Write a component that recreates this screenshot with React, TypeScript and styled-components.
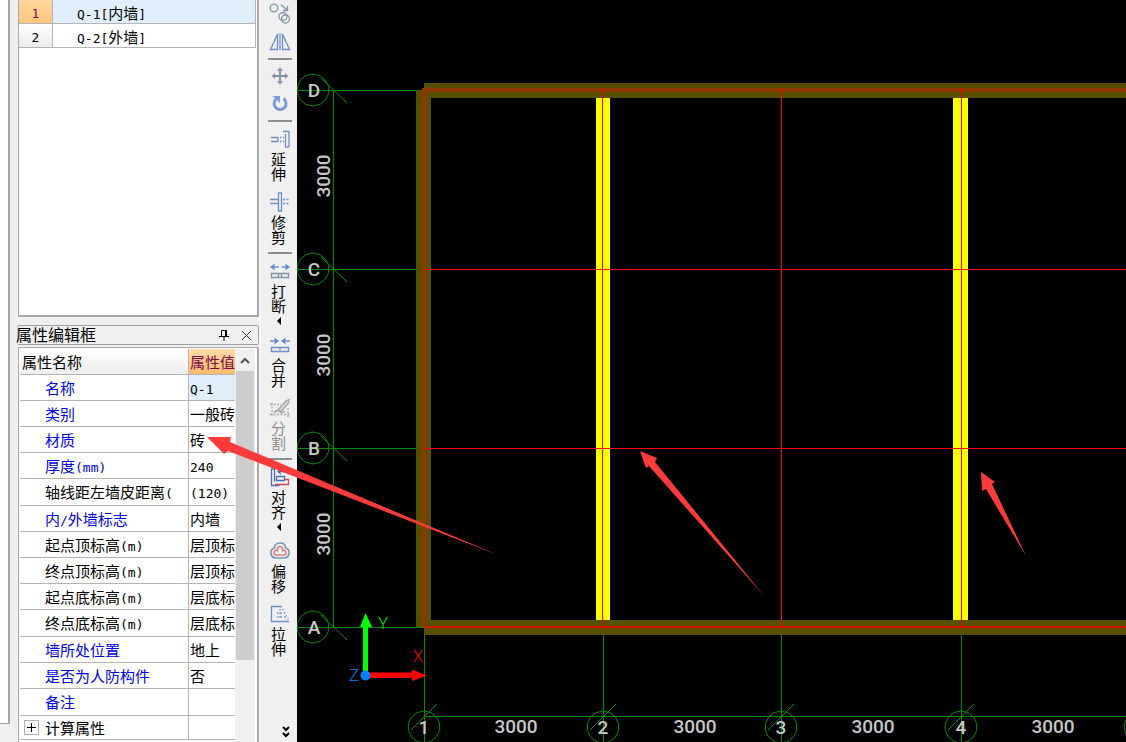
import React from "react";
import styled, { createGlobalStyle } from "styled-components";

const GlobalStyle = createGlobalStyle`
  * { box-sizing: border-box; }
  body {
    margin: 0;
    background: #f0f0f0;
    font-family: "Noto Sans CJK SC", sans-serif;
    font-size: 15px;
    color: #000;
  }
  button { font: inherit; color: inherit; border: 0; background: none; padding: 0; }
`;

const Page = styled.div`
  position: relative;
  display: flex;
  height: 100vh;
  overflow: hidden;
`;

const DockEdge = styled.div`
  flex: none;
  width: 10px;
  display: flex;
  flex-direction: column;
  padding-bottom: 18px;
`;

const DockSheet = styled.div`
  flex: 1;
  background: #fff;
  border-right: 2px solid #a8a8a8;
  border-bottom: 1px solid #a0a0a0;
`;

const SidePanel = styled.div`
  flex: none;
  width: 249px;
  padding-left: 7px;
  display: flex;
  flex-direction: column;
`;

const ListPane = styled.section`
  flex: none;
  height: 317px;
  margin-left: 1px;
  background: #fff;
  border: solid #a8a8a8;
  border-width: 0 2px 2px 1px;
`;

const Grid = styled.table`
  width: 100%;
  table-layout: fixed;
  border-collapse: separate;
  border-spacing: 0;
`;

const ListGrid = styled(Grid)`
  width: 237px;
  border-right: 1px solid #b4b4b4;
`;

const IndexCell = styled.th<{ $active?: boolean }>`
  width: 34px;
  height: 24px;
  padding: 0;
  font-weight: 400;
  line-height: 20px;
  color: ${(p) => (p.$active ? "#850f45" : "#000")};
  background: ${(p) =>
    p.$active ? "linear-gradient(#ffd7a0, #ffc77c)" : "linear-gradient(#fff, #ececec)"};
  border-right: 1px solid #b4b4b4;
  border-bottom: 1px solid #b4b4b4;
`;

const NameCell = styled.td<{ $active?: boolean }>`
  height: 24px;
  padding: 2px 0 0 24px;
  line-height: 20px;
  white-space: nowrap;
  background: ${(p) => (p.$active ? "#e1effd" : "#fff")};
  border-bottom: 1px solid #b4b4b4;
`;

const TitleBar = styled.header`
  flex: none;
  display: flex;
  align-items: center;
  height: 20px;
  margin: 8px 0 2px;
  padding-right: 4px;
  border: 1px solid #a0a0a0;
  border-left-color: #c8c8c8;
  border-radius: 2px;
`;

const PanelTitle = styled.h2`
  flex: 1;
  margin: 0 0 2px -2px;
  font-size: 16px;
  font-weight: 400;
  line-height: 16px;
`;

const TitleButton = styled.button`
  width: 16px;
  height: 16px;
  margin-left: 6px;
  display: flex;
  align-items: center;
  justify-content: center;
`;

const PropertyPane = styled.section`
  flex: 1;
  min-height: 0;
  display: flex;
  overflow: hidden;
  margin-left: 1px;
  padding: 1px 2px 0 1px;
  border: solid #a8a8a8;
  border-width: 1px 2px 0 1px;
  background: #fff;
`;

const TableClip = styled.div`
  flex: 1;
  min-width: 0;
  overflow: hidden;
`;

const HeadCell = styled.th<{ $active?: boolean }>`
  width: ${(p) => (p.$active ? "auto" : "169px")};
  height: 26px;
  padding: 0 0 0 ${(p) => (p.$active ? 1 : 2)}px;
  text-align: left;
  font-weight: 400;
  line-height: 24px;
  white-space: nowrap;
  color: ${(p) => (p.$active ? "#7a0a4a" : "#000")};
  background: ${(p) =>
    p.$active ? "linear-gradient(#ffdca8, #f9bd6c)" : "linear-gradient(#fff, #ededed)"};
  border-right: ${(p) => (p.$active ? 0 : "1px solid #b4b4b4")};
  border-bottom: 1px solid #b4b4b4;
`;

const PropName = styled.td<{ $h: number; $link?: boolean }>`
  height: ${(p) => p.$h}px;
  padding: 0 0 0 25px;
  line-height: 22px;
  white-space: nowrap;
  color: ${(p) => (p.$link ? "#0000e6" : "#000")};
  border-right: 1px solid #b4b4b4;
  border-bottom: 1px solid #b4b4b4;
`;

const PropValue = styled.td<{ $active?: boolean }>`
  padding: 0 0 0 1px;
  line-height: 22px;
  white-space: nowrap;
  background: ${(p) => (p.$active ? "#e1effd" : "#fff")};
  border-bottom: 1px solid #b4b4b4;
`;

const GroupName = styled(PropName)`
  padding-left: 4px;
`;

const GroupLabel = styled.div`
  display: flex;
  align-items: center;
  gap: 6px;
`;

const ExpandButton = styled.button`
  width: 15px;
  height: 15px;
  border: 1px solid #b0b0b0;
  display: flex;
  align-items: center;
  justify-content: center;
`;

const Latin = styled.span`
  font-family: "DejaVu Sans Mono", monospace;
  font-size: 13px;
  line-height: 1;
`;

const ScrollBar = styled.div`
  flex: none;
  width: 20px;
  padding: 0 1px;
  background: #f0f0f0;
  display: flex;
  flex-direction: column;
`;

const ScrollUp = styled.button`
  flex: none;
  height: 22px;
  display: flex;
  align-items: center;
  justify-content: center;
`;

const ScrollTrack = styled.div`
  flex: 1;
`;

const ScrollThumb = styled.div`
  height: 78%;
  background: #cdcdcd;
`;

const Toolbar = styled.nav`
  flex: none;
  width: 38px;
  padding: 0 5px 0 7px;
  display: flex;
  flex-direction: column;
  align-items: center;
  border-left: 2px solid #f8f8f8;
`;

const IconTool = styled.button`
  flex: none;
  width: 24px;
  height: 28px;
  display: flex;
  align-items: center;
  justify-content: center;
`;

const TextTool = styled.button`
  flex: none;
  width: 24px;
  padding: 5px 0;
  display: flex;
  flex-direction: column;
  align-items: center;
  gap: 3px;
  &:disabled { color: #8c8c8c; }
`;

const ToolLabel = styled.span`
  width: 15px;
  height: 30px;
  margin-right: 3px;
  writing-mode: vertical-rl;
  line-height: 15px;
`;

const Caret = styled.span`
  width: 0;
  height: 8px;
  margin-right: 2px;
  border: solid transparent;
  border-width: 4px 4px 4px 0;
  border-right-color: #000;
`;

const Separator = styled.hr`
  flex: none;
  width: 24px;
  height: 2px;
  margin: 2px 0;
  border: 0;
  background: #8c8c8c;
`;

const MoreButton = styled.button`
  margin: auto 0 2px 12px;
  height: 14px;
  display: flex;
`;

const Drawing = styled.main`
  flex: 1;
  min-width: 0;
  background: #000;
  svg { display: block; width: 100%; height: 100%; }
`;

const AxisText = styled.text`
  font-family: Roboto, sans-serif;
  font-size: 19px;
  font-weight: 500;
  fill: #c8c8c8;
  text-anchor: middle;
`;

const UcsText = styled.text`
  font-family: Roboto, sans-serif;
  font-size: 17px;
  font-weight: 300;
  text-anchor: middle;
`;

const Notes = styled.svg`
  position: absolute;
  inset: 0;
  width: 100%;
  height: 100%;
  pointer-events: none;
`;

/* Half-width characters are set in the monospace face, ideographs in the CJK one. */
function Mixed({ text }: { text: string }) {
  return (
    <>
      {text.split(/([\x20-\x7e]+)/).map((part, i) =>
        i % 2 ? <Latin key={i}>{part}</Latin> : part
      )}
    </>
  );
}

const components = ["Q-1[内墙]", "Q-2[外墙]"];

const properties: { name: string; value: string; link?: boolean; h: number }[] = [
  { name: "名称", value: "Q-1", link: true, h: 26 },
  { name: "类别", value: "一般砖", link: true, h: 26 },
  { name: "材质", value: "砖", link: true, h: 26 },
  { name: "厚度(mm)", value: "240", link: true, h: 26 },
  { name: "轴线距左墙皮距离(", value: "(120)", h: 27 },
  { name: "内/外墙标志", value: "内墙", link: true, h: 26 },
  { name: "起点顶标高(m)", value: "层顶标", h: 26 },
  { name: "终点顶标高(m)", value: "层顶标", h: 26 },
  { name: "起点底标高(m)", value: "层底标", h: 26 },
  { name: "终点底标高(m)", value: "层底标", h: 27 },
  { name: "墙所处位置", value: "地上", link: true, h: 26 },
  { name: "是否为人防构件", value: "否", link: true, h: 26 },
  { name: "备注", value: "", link: true, h: 27 },
];

const BLUE = "#6f8fc6";
const GRAY = "#8494a8";

function Icon({ children, h = 20 }: { children: React.ReactNode; h?: number }) {
  return (
    <svg width="22" height={h} viewBox={`0 0 22 ${h}`} fill="none" stroke={BLUE} strokeWidth="1.3">
      {children}
    </svg>
  );
}

const CopyIcon = () => (
  <Icon h={22}>
    <g stroke={GRAY}>
      <circle cx="5" cy="5" r="3.8" />
      <path d="M12 1.5l6.5 6M18.5 3v4.5h-4.5" />
      <circle cx="14" cy="13.5" r="4" />
      <circle cx="16.5" cy="16" r="4" />
    </g>
  </Icon>
);

const MirrorIcon = () => (
  <Icon h={22}>
    <path d="M1.5 18.5h7V3zM20.5 18.5h-7V3zM11 2v17" fill="#e8effa" />
  </Icon>
);

const MoveIcon = () => (
  <Icon h={22}>
    <path d="M11 4v14M4 11h14" stroke={GRAY} strokeWidth="2" />
    <path d="M11 2.5l3 3.5H8zM11 19.5l3-3.5H8zM2.5 11L6 8v6zM19.5 11L16 8v6z" fill={GRAY} stroke="none" />
  </Icon>
);

const RotateIcon = () => (
  <Icon h={22}>
    <path d="M14.5 5.5a6 6 0 1 1-7.5.5" strokeWidth="3" stroke="#7b9bd6" />
    <path d="M3.5 3h7.5v7z" fill="#7b9bd6" stroke="none" />
  </Icon>
);

const ExtendIcon = () => (
  <Icon>
    <path d="M2 8.5h7M2 12.5h7M9 8v5" />
    <path d="M11 8.5h4M11 12.5h4" strokeDasharray="1.5 1.5" />
    <path d="M14 2.5h6V18M16.5 5v13M16 18h4" />
  </Icon>
);

const TrimIcon = () => (
  <Icon>
    <path d="M9.5 1h3v18h-3zM1 7.5h8M1 11.5h8" />
    <path d="M14 7.5h7M14 11.5h7" strokeDasharray="2 1.5" />
  </Icon>
);

const BreakIcon = () => (
  <Icon>
    <path d="M4 6h6M12.5 6h6" />
    <path d="M1 6l5-3.5-1 3.5 1 3.5zM21 6l-5-3.5 1 3.5-1 3.5z" fill="#5c86d0" stroke="none" />
    <path d="M2.5 12.5h17v4h-17zM9.5 12.5v4M12.5 12.5v4" stroke={GRAY} />
  </Icon>
);

const MergeIcon = () => (
  <Icon>
    <path d="M1 6h5M16 6h5" />
    <path d="M10 6L5 2.5 6 6 5 9.5zM12 6l5-3.5-1 3.5 1 3.5z" fill="#5c86d0" stroke="none" />
    <path d="M2.5 12.5h17v4h-17zM11 12.5v4" />
  </Icon>
);

const SplitIcon = () => (
  <Icon>
    <g stroke="#a8a8a8">
      <path d="M1 6.5h11M1 16.5h20M3 5v13M19 10v9" strokeDasharray="2 1.5" />
      <path d="M9 12l8-9 3-1.5L19.5 5l-7 8.5zM5 15c2-4 5-3 6-1 1 1.5 3 .5 5-1" fill="#d4d4d4" />
    </g>
  </Icon>
);

const AlignIcon = () => (
  <Icon>
    <path d="M2.5 2v16.5h8M5.5 2v12.5M2 2h4" stroke="#4e6fae" />
    <path d="M9 4.5h10M12 2L9 4.5 12 7" stroke="#4e6fae" />
    <path d="M7.5 9.5h8v4h-8z" stroke="#4e6fae" />
    <path d="M6 17.5h13.5v-5H16" stroke="#d04a5a" />
  </Icon>
);

const OffsetIcon = () => (
  <Icon>
    <path d="M11 2c3.5 0 5.5 2 5.5 5 3 .5 4 3 3.5 5.5-.5 3-3 4.5-5 4.5H7c-2 0-4.5-1.5-5-4.5C1.5 10 2.5 7.5 5.5 7c0-3 2-5 5.5-5z" stroke="#7595b5" strokeWidth="1.6" />
    <path d="M11 5.5c2 0 3 1.5 2.5 4 2-.5 3.5.5 3.5 2s-1 2.5-2.5 2.5h-7C6 14 5 13 5 11.5s1.5-2.5 3.5-2C8 7 9 5.5 11 5.5z" stroke="#dd7a80" strokeWidth="1.5" />
  </Icon>
);

const StretchIcon = () => (
  <Icon>
    <path d="M12 2.5H2.5v15H20" />
    <path d="M12 2l8 15M11 5v10M8 9h8M8 13h9" strokeDasharray="1.5 2" />
  </Icon>
);

/* Plan geometry: axis grid of the floor plan, measured from the view's corner. */
const columns = [
  { x: 127, label: "1" },
  { x: 306, label: "2" },
  { x: 484, label: "3" },
  { x: 664, label: "4" },
  { x: 843, label: "" },
];
const rows = [
  { label: "D", y: 90 },
  { label: "C", y: 269 },
  { label: "B", y: 448 },
  { label: "A", y: 627 },
];
const FAR = 4000;

function Bubble({ x, y }: { x: number; y: number }) {
  const points = Array.from({ length: 14 }, (_, i) => {
    const a = (i / 14) * Math.PI * 2 - Math.PI / 2;
    return `${x + 16 * Math.cos(a)},${y + 16 * Math.sin(a)}`;
  }).join(" ");
  return <polygon points={points} />;
}

function Plan() {
  return (
    <svg aria-label="平面图">
      <g fill="none" stroke="#008a00" strokeWidth="1">
        <path d={`M36.5 90V627M127 716.5H${FAR}`} />
        {rows.map((r) => (
          <g key={r.label}>
            <Bubble x={16} y={r.y} />
            <path d={`M0 ${r.y + 0.5}H127M24 ${r.y - 12}L50 ${r.y + 13}`} />
          </g>
        ))}
        {columns.map(({ x }) => (
          <g key={x}>
            <Bubble x={x} y={727} />
            <path d={`M${x + 0.5} 627V${FAR}M${x - 13} 730L${x + 13} 704`} />
          </g>
        ))}
      </g>

      <g fill="#585000">
        <rect x="127" y="83" width={FAR} height="15" />
        <rect x="119" y="90" width="15" height="537" />
        <rect x="127" y="620" width={FAR} height="15" />
      </g>
      <g fill="#8c3800">
        <rect x="125" y="88" width={FAR} height="4" />
        <rect x="125" y="88" width="4" height="539" />
      </g>
      <g fill="#ffff00">
        <rect x="299" y="98" width="14" height="522" />
        <rect x="656" y="98" width="15" height="522" />
      </g>
      <g fill="#ff0000">
        <rect x="127" y="269" width={FAR} height="1" />
        <rect x="127" y="448" width={FAR} height="1" />
        <rect x="127" y="626" width={FAR} height="2" fill="#d81400" />
        {columns.slice(1).map(({ x }) => (
          <rect key={x} x={x === 306 ? 305 : x} y="88" width="1" height="539" />
        ))}
      </g>

      {rows.map((r) => (
        <AxisText key={r.label} x="17" y={r.y + 7}>{r.label}</AxisText>
      ))}
      {rows.slice(1).map((r) => (
        <AxisText key={r.label} transform={`translate(33 ${r.y - 93}) rotate(-90)`}>3000</AxisText>
      ))}
      {columns.slice(0, 4).map(({ x, label }) => (
        <React.Fragment key={x}>
          <AxisText x={x} y="734">{label}</AxisText>
          <AxisText x={x + 92} y="733">3000</AxisText>
        </React.Fragment>
      ))}

      <path d="M66 675h5V627h4L68.5 613 63 627h3z" fill="#00ff00" />
      <path d="M69 672.5h46V669.5L130 675.5 115 681V678H69z" fill="#ff0000" />
      <circle cx="68.5" cy="675.5" r="5" fill="#007fff" />
      <UcsText x="86" y="629" fill="#00e000">Y</UcsText>
      <UcsText x="121" y="662" fill="#f00000">X</UcsText>
      <UcsText x="57" y="681" fill="#007fff">Z</UcsText>
    </svg>
  );
}

export default function App() {
  return (
    <Page>
      <GlobalStyle />
      <DockEdge>
        <DockSheet />
      </DockEdge>
      <SidePanel>
        <ListPane>
          <ListGrid>
            <tbody>
              {components.map((name, i) => (
                <tr key={name}>
                  <IndexCell scope="row" $active={i === 0}>
                    <Mixed text={String(i + 1)} />
                  </IndexCell>
                  <NameCell $active={i === 0}>
                    <Mixed text={name} />
                  </NameCell>
                </tr>
              ))}
            </tbody>
          </ListGrid>
        </ListPane>
        <TitleBar>
          <PanelTitle>属性编辑框</PanelTitle>
          <TitleButton aria-label="固定">
            <svg width="10" height="12" viewBox="0 0 10 12" fill="none" stroke="#000">
              <path d="M2.5 7V1.5h5M0 7.5h10M5 8v4" />
              <path d="M7 1v6" strokeWidth="2" />
            </svg>
          </TitleButton>
          <TitleButton aria-label="关闭">
            <svg width="11" height="11" viewBox="0 0 11 11" stroke="#333">
              <path d="M1 1l9 9M10 1l-9 9" />
            </svg>
          </TitleButton>
        </TitleBar>
        <PropertyPane>
          <TableClip>
            <Grid>
              <thead>
                <tr>
                  <HeadCell scope="col">属性名称</HeadCell>
                  <HeadCell scope="col" $active>属性值</HeadCell>
                </tr>
              </thead>
              <tbody>
                {properties.map((p, i) => (
                  <tr key={p.name}>
                    <PropName $h={p.h} $link={p.link}>
                      <Mixed text={p.name} />
                    </PropName>
                    <PropValue $active={i === 0}>
                      <Mixed text={p.value} />
                    </PropValue>
                  </tr>
                ))}
                <tr>
                  <GroupName $h={24}>
                    <GroupLabel>
                      <ExpandButton aria-label="展开">
                        <svg width="9" height="9" viewBox="0 0 9 9" stroke="#000">
                          <path d="M0 4.5h9M4.5 0v9" />
                        </svg>
                      </ExpandButton>
                      计算属性
                    </GroupLabel>
                  </GroupName>
                  <PropValue />
                </tr>
              </tbody>
            </Grid>
          </TableClip>
          <ScrollBar>
            <ScrollUp aria-label="向上滚动">
              <svg width="10" height="7" viewBox="0 0 10 7" fill="none" stroke="#555" strokeWidth="2">
                <path d="M1 6l4-4 4 4" />
              </svg>
            </ScrollUp>
            <ScrollTrack>
              <ScrollThumb />
            </ScrollTrack>
          </ScrollBar>
        </PropertyPane>
      </SidePanel>
      <Toolbar>
        <IconTool aria-label="复制"><CopyIcon /></IconTool>
        <IconTool aria-label="镜像"><MirrorIcon /></IconTool>
        <Separator />
        <IconTool aria-label="移动"><MoveIcon /></IconTool>
        <IconTool aria-label="旋转"><RotateIcon /></IconTool>
        <Separator />
        <TextTool><ExtendIcon /><ToolLabel>延伸</ToolLabel></TextTool>
        <TextTool><TrimIcon /><ToolLabel>修剪</ToolLabel></TextTool>
        <Separator />
        <TextTool><BreakIcon /><ToolLabel>打断</ToolLabel><Caret /></TextTool>
        <TextTool><MergeIcon /><ToolLabel>合并</ToolLabel></TextTool>
        <TextTool disabled><SplitIcon /><ToolLabel>分割</ToolLabel></TextTool>
        <Separator />
        <TextTool><AlignIcon /><ToolLabel>对齐</ToolLabel><Caret /></TextTool>
        <TextTool><OffsetIcon /><ToolLabel>偏移</ToolLabel></TextTool>
        <TextTool><StretchIcon /><ToolLabel>拉伸</ToolLabel></TextTool>
        <MoreButton aria-label="更多">
          <svg width="8" height="12" viewBox="0 0 8 12" fill="none" stroke="#000" strokeWidth="2">
            <path d="M1 1l3 3 3-3M1 7l3 3 3-3" />
          </svg>
        </MoreButton>
      </Toolbar>
      <Drawing>
        <Plan />
      </Drawing>
      <Notes fill="#fd3b3b" aria-hidden="true">
        <path d="M207 437L231 437 230 442 498 555 228 451 224 454z" />
        <path d="M640 451L657 458 655 462 765 597 649 466 646 468z" />
        <path d="M981 472L995 482 992 484 1026 556 986 489 982 491z" />
      </Notes>
    </Page>
  );
}
